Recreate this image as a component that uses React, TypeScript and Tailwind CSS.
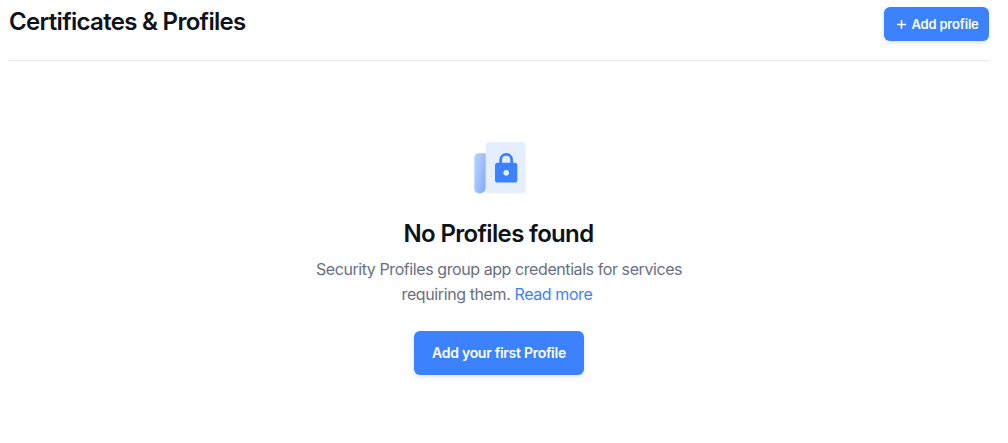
function ProfilesIcon() {
  return (
    <svg width="52" height="52" viewBox="0 0 52 52" fill="none" aria-hidden="true">
      <defs>
        <linearGradient id="spine" x1="0" y1="31" x2="12" y2="33" gradientUnits="userSpaceOnUse">
          <stop stopColor="#b3cdff" />
          <stop offset="1" stopColor="#8bb0fd" />
        </linearGradient>
      </defs>
      <rect x="11.800" y="0.3" width="39.7" height="51" rx="3.5" fill="#e5eeff" />
      <path d="M11.700 11.2H4.500C2 11.2.3 13 .3 15.2V47a5.400 5.400 0 0 0 5.400 4.400c3.500 0 6-2 6-5.400z" fill="url(#spine)" />
      <path d="M26.700 21v-3.200a5.500 5.500 0 0 1 11 0V21" stroke="#3c82ff" strokeWidth="2.800" />
      <rect x="21" y="20.700" width="22.300" height="19.800" rx="2.600" fill="#3c82ff" />
      <circle cx="32.200" cy="30.700" r="2.800" fill="#e5eeff" />
    </svg>
  );
}

export default function App() {
  return (
    <div className="flex h-[443px] flex-col bg-white pr-[19px] pl-[9px] font-['Inter',sans-serif] text-[#0e121b]">
      <header className="flex h-[61px] items-start justify-between border-b border-[#e6e8f0]">
        <h1 className="mt-[6px] text-[24px] leading-8 font-semibold tracking-[-0.69px] whitespace-nowrap">Certificates &amp; Profiles</h1>
        <button className="mt-[7px] flex h-[34px] w-[105px] items-center rounded-[6px] bg-[#3c82ff] pl-[13px] text-[13px] font-semibold whitespace-nowrap text-white shadow-[0_2px_4px_rgba(15,35,70,0.13)]">
          <svg className="mr-[5.500px] shrink-0" width="9" height="9" viewBox="0 0 9 9" fill="none" stroke="white" strokeWidth="1.500" aria-hidden="true">
            <path d="M4.500 0v9M0 4.500h9" />
          </svg>
          <span className="pt-px tracking-[-0.2px]">Add profile</span>
        </button>
      </header>
      <main className="flex flex-col items-center pt-[81px]">
        <div className="ml-px"><ProfilesIcon /></div>
        <h2 className="mt-[24px] mr-px text-[24px] leading-8 font-semibold tracking-[-0.66px] whitespace-nowrap">No Profiles found</h2>
        <p className="mt-[7px] text-center text-[16px] leading-[25px] whitespace-nowrap text-[#697083]">
          <span className="tracking-[-0.42px]">Security Profiles group app credentials for services</span>
          <br />
          <span className="mr-[4px] tracking-[-0.4px]">requiring them. <a href="#" className="text-[#3c82ff]">Read more</a></span>
        </p>
        <button className="mt-[24px] h-[44px] w-[170px] rounded-[6px] bg-[#3c82ff] pb-[2px] text-[14px] font-semibold tracking-[-0.28px] whitespace-nowrap text-white shadow-[0_2px_4px_rgba(15,35,70,0.13)]">
          Add your first Profile
        </button>
      </main>
    </div>
  );
}
